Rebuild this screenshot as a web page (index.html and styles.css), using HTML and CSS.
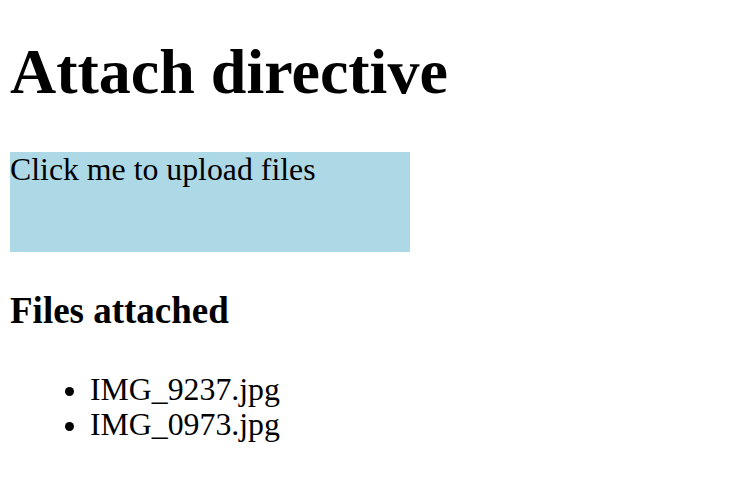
FILE: index.html
```html
<!DOCTYPE html>
<html>
<head>
<meta charset="utf-8">
<link rel="stylesheet" href="styles.css">
</head>
<body>
<h1 class="title">Attach directive</h1>
<div class="upload">Click me to upload files</div>
<h2 class="subtitle">Files attached</h2>
<ul class="files">
<li>IMG_9237.jpg</li>
<li>IMG_0973.jpg</li>
</ul>
</body>
</html>
```
FILE: styles.css
```css
body {
  margin: 10px;
  font-family: "Liberation Serif", "Times New Roman", serif;
  color: #000;
  background: #fff;
}
.title {
  font-size: 64px;
  font-weight: bold;
  margin: 25px 0 43px;
  line-height: 74px;
}
.upload {
  width: 400px;
  height: 100px;
  background: #add8e6;
  font-size: 31.8px;
  line-height: 36px;
}
.subtitle {
  font-size: 37px;
  font-weight: bold;
  margin: 38px 0 40px;
  line-height: 42px;
}
.files {
  margin: 0;
  padding-left: 80px;
  font-size: 31.8px;
  line-height: 35px;
}
```
